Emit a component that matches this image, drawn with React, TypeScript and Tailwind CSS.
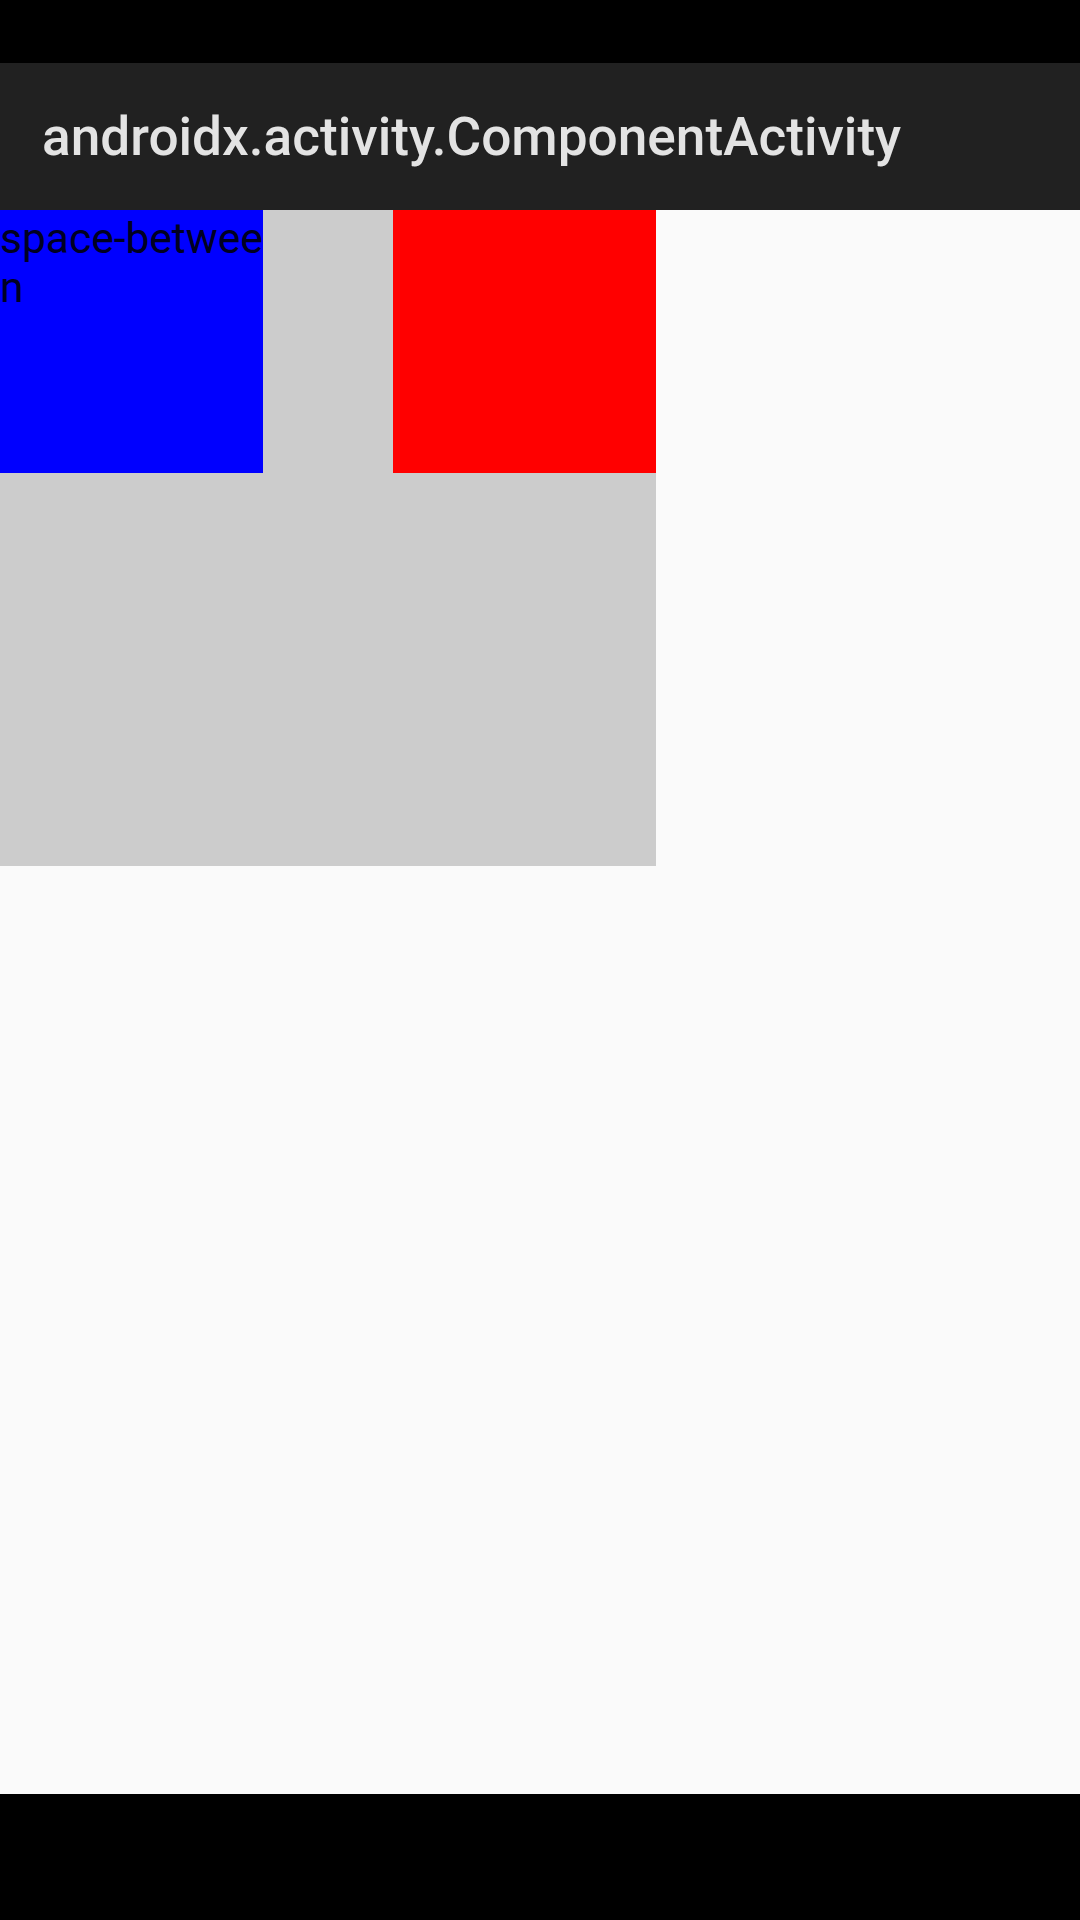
export default function App() {
  return (
    <div className="flex h-[1920px] w-[1080px] flex-col bg-[#fafafa] font-['Roboto',sans-serif]">
      {/* status bar */}
      <div className="h-[63px] shrink-0 bg-black" />

      {/* action bar */}
      <div className="flex h-[147px] shrink-0 items-center bg-[#212121] px-[42px] pt-[2px]">
        <span className="text-[53.2px] font-medium leading-none text-[#e3e3e3]">
          androidx.activity.ComponentActivity
        </span>
      </div>

      {/* content */}
      <div className="flex-1">
        <div className="flex h-[656px] w-[656px] justify-between bg-[#cccccc]">
          <div className="h-[263px] w-[263px] break-all bg-[#0000ff] pt-[4px] text-[42.5px] leading-[49px] text-[#000021]">
            space-between
          </div>
          <div className="h-[263px] w-[263px] bg-[#ff0000]" />
        </div>
      </div>

      {/* nav bar */}
      <div className="h-[126px] shrink-0 bg-black" />
    </div>
  );
}
